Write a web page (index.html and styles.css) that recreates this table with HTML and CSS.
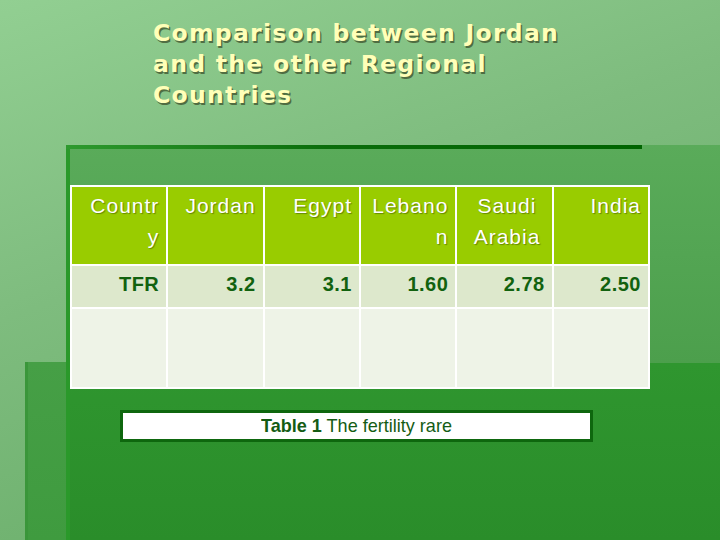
FILE: index.html
```html
<html>
    <head>
        <title>Comparison between Jordan and the other Regional Countries</title>
        <link rel="stylesheet" href="styles.css">
    </head>
    <body>
        <div class="slide">
            <h1 class="title">Comparison between Jordan<br>and the other Regional<br>Countries</h1>

            <div class="panel">
                <div class="rule"></div>

                <!-- fertility table -->
                <table class="rates">
                    <tr class="head">
                        <th>Countr<br>y</th>
                        <th>Jordan</th>
                        <th>Egypt</th>
                        <th>Lebano<br>n</th>
                        <th class="mid">Saudi<br>Arabia</th>
                        <th>India</th>
                    </tr>
                    <tr class="vals">
                        <td>TFR</td>
                        <td>3.2</td>
                        <td>3.1</td>
                        <td>1.60</td>
                        <td>2.78</td>
                        <td>2.50</td>
                    </tr>
                    <tr class="blank">
                        <td></td><td></td><td></td><td></td><td></td><td></td>
                    </tr>
                </table>

                <div class="caption"><span><b>Table 1</b> The fertility rare</span></div>
            </div>
        </div>
    </body>
</html>
```

FILE: styles.css
```css
body {
    margin: 0;
    background: #62a962;
}

.slide {
    width: 720px;
    height: 540px;
    overflow: hidden;
    display: flex;
    flex-direction: column;
    background:
        linear-gradient(#3a963a, #3a963a) 25px 362px / 3px 178px no-repeat,
        linear-gradient(#469f46, #3f9b3f) 25px 362px / 45px 178px no-repeat,
        linear-gradient(160deg, #92cf92 0%, #7ebc7e 40%, #62a962 100%);
}

.title {
    margin: 0;
    padding: 18px 0 0 153px;
    font-family: "DejaVu Sans", "Liberation Sans", sans-serif;
    font-weight: bold;
    font-size: 23.5px;
    line-height: 31px;
    letter-spacing: 1.3px;
    color: #ffffb8;
    text-shadow: 1.5px 1.5px 0 rgba(55, 70, 35, 0.7);
}

.panel {
    flex: 1;
    margin: 34px 0 0 66px;
    border-left: 4px solid #2a992a;
    background: linear-gradient(to bottom, #5aab5a 0, #4c9f4c 218px, #2f962f 218px, #2a8d2a 100%);
}

.rule {
    width: 576px;
    height: 4px;
    margin-left: -4px;
    background: linear-gradient(to right, #2e9a2e, #0b6d0b 45%, #006400);
}

.rates {
    margin-top: 36px;
    width: 580px;
    table-layout: fixed;
    border-collapse: separate;
    border-spacing: 2px;
    background: #fff;
    font-family: "Liberation Sans", Arial, sans-serif;
}

.rates th,
.rates td {
    padding: 3px 7px 0;
    vertical-align: top;
    text-align: right;
}

.head th {
    height: 77px;
    background: #99cc00;
    color: #fff;
    font-weight: normal;
    font-size: 21px;
    line-height: 31px;
    letter-spacing: 1px;
    text-shadow: 1px 1px 1px rgba(60, 80, 0, 0.55);
}

.head th.mid {
    text-align: center;
    padding-left: 12px;
}

.vals td {
    height: 41px;
    padding-top: 6px;
    background: #dde8cc;
    color: #12620f;
    font-weight: bold;
    font-size: 20px;
    line-height: 24px;
    letter-spacing: 0.5px;
}

.blank td {
    height: 78px;
    padding: 0;
    background: #eef3e7;
}

.caption {
    box-sizing: border-box;
    width: 473px;
    height: 32px;
    margin: 21px 0 0 50px;
    border: 3px solid #0e670e;
    background: #fff;
    text-align: center;
    font-family: "Liberation Sans", Arial, sans-serif;
    font-size: 19px;
    line-height: 26px;
    color: #145c14;
}

.caption span {
    display: inline-block;
    transform: scaleX(0.95);
}
```
